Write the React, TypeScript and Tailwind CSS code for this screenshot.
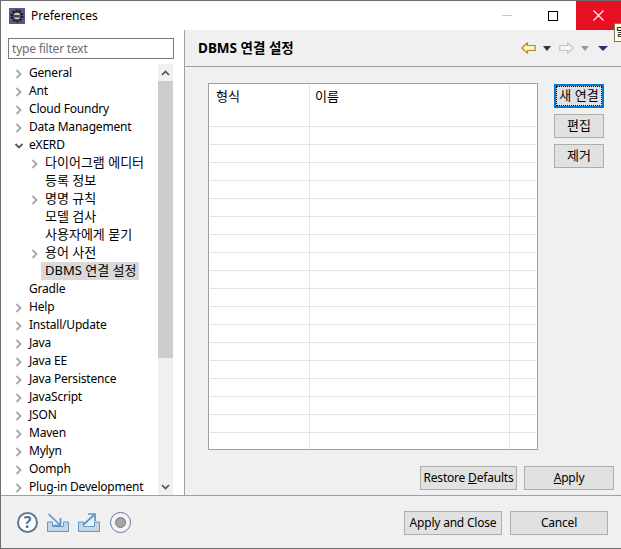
import type { ReactNode } from "react";

const FONT = "font-['Noto_Sans','Noto_Sans_CJK_KR',sans-serif]";

type Node = { label: string; level: 0 | 1; icon?: "closed" | "open"; selected?: boolean };

const tree: Node[] = [
  { label: "General", level: 0, icon: "closed" },
  { label: "Ant", level: 0, icon: "closed" },
  { label: "Cloud Foundry", level: 0, icon: "closed" },
  { label: "Data Management", level: 0, icon: "closed" },
  { label: "eXERD", level: 0, icon: "open" },
  { label: "다이어그램 에디터", level: 1, icon: "closed" },
  { label: "등록 정보", level: 1 },
  { label: "명명 규칙", level: 1, icon: "closed" },
  { label: "모델 검사", level: 1 },
  { label: "사용자에게 묻기", level: 1 },
  { label: "용어 사전", level: 1, icon: "closed" },
  { label: "DBMS 연결 설정", level: 1, selected: true },
  { label: "Gradle", level: 0 },
  { label: "Help", level: 0, icon: "closed" },
  { label: "Install/Update", level: 0, icon: "closed" },
  { label: "Java", level: 0, icon: "closed" },
  { label: "Java EE", level: 0, icon: "closed" },
  { label: "Java Persistence", level: 0, icon: "closed" },
  { label: "JavaScript", level: 0, icon: "closed" },
  { label: "JSON", level: 0, icon: "closed" },
  { label: "Maven", level: 0, icon: "closed" },
  { label: "Mylyn", level: 0, icon: "closed" },
  { label: "Oomph", level: 0, icon: "closed" },
  { label: "Plug-in Development", level: 0, icon: "closed" },
];

function Twisty({ open }: { open?: boolean }) {
  return (
    <svg width="10" height="10" viewBox="0 0 10 10" fill="none" className="shrink-0">
      {open ? (
        <path d="M1.5 3l3.5 3.5L8.5 3" stroke="#595959" strokeWidth="1.8" />
      ) : (
        <path d="M2.5 1l4 4-4 4" stroke="#a6a6a6" strokeWidth="1.8" />
      )}
    </svg>
  );
}

function TreeRow({ node }: { node: Node }) {
  return (
    <div className={`flex h-[18px] items-center ${node.level === 1 ? "pl-[29px]" : "pl-[13px]"}`}>
      <div className="flex w-[12px] shrink-0 items-center pt-[2px]">
        {node.icon && <Twisty open={node.icon === "open"} />}
      </div>
      <span
        className={`whitespace-nowrap ${
          node.level === 1 ? "pb-[2px] text-[13px] leading-[16px] tracking-normal" : "leading-[18px]"
        } ${node.selected ? "-ml-px bg-[#d9d9d9] pl-[4px] pr-[3px]" : "pl-[3px]"}`}
      >
        {node.label}
      </span>
    </div>
  );
}

function Btn({ children, className }: { children: ReactNode; className: string }) {
  return (
    <button className={`flex h-[24px] items-center justify-center border border-[#adadad] bg-[#e1e1e1] text-black ${className}`}>
      {children}
    </button>
  );
}

function Arrow({ color, fill, flip }: { color: string; fill: string; flip?: boolean }) {
  return (
    <svg width="15" height="12" viewBox="0 0 15 12" className={flip ? "-scale-x-100" : ""}>
      <path d="M.8 6L6.5.8v2.7h7.7v5H6.5v2.7z" fill={fill} stroke={color} strokeWidth="1.2" strokeLinejoin="round" />
    </svg>
  );
}

function Caret({ color, w = 8 }: { color: string; w?: number }) {
  return (
    <svg width={w} height="5" viewBox="0 0 8 5" preserveAspectRatio="none">
      <path d="M0 0h8L4 5z" fill={color} />
    </svg>
  );
}

function TrayIcon({ up }: { up?: boolean }) {
  return (
    <svg width="22" height="19" viewBox="0 0 22 19" fill="none">
      <path d="M.5 9v9.5h21V9h-5v4.5h-11V9z" fill="#c3d7ea" stroke="#6a97c2" strokeWidth="1" />
      {up ? (
        <path d="M5 12L16 2M10 1h7v7" stroke="#5a95c8" strokeWidth="1.7" />
      ) : (
        <path d="M1.5 1l11 10.5M13.5 5v7.5H6" stroke="#5a95c8" strokeWidth="1.7" />
      )}
    </svg>
  );
}

export default function App() {
  const rows = Array.from({ length: 18 });

  return (
    <div className={`relative flex h-[549px] w-[621px] flex-col overflow-hidden border-y border-l border-[#6e6e6e] bg-white text-[12px] tracking-[-0.2px] text-black ${FONT}`}>
      {/* title bar */}
      <div className="flex h-[29px] shrink-0 items-center bg-white">
        <svg width="16" height="16" viewBox="0 0 16 16" className="ml-[8px]">
          <rect width="16" height="16" fill="#66528f" />
          <circle cx="8" cy="8" r="5.2" fill="#c9c6d0" stroke="#1f1f1f" strokeWidth="2.6" strokeDasharray="2.2 1" />
          <circle cx="8" cy="8" r="4.2" fill="none" stroke="#1f1f1f" strokeWidth="1.4" />
          <rect x="4.5" y="7" width="7" height="2.5" fill="#4d4064" />
        </svg>
        <span className="ml-[6px] mt-[1px] tracking-normal">Preferences</span>
        <div className="ml-auto flex h-[29px] items-center">
          <div className="flex h-[29px] w-[46px] items-center justify-center">
            <div className="h-px w-[10px] bg-[#c8c8c8]" />
          </div>
          <div className="flex h-[29px] w-[46px] items-center justify-center">
            <div className="h-[10px] w-[10px] border border-black" />
          </div>
          <div className="flex h-[29px] w-[45px] items-center justify-center bg-[#e81123]">
            <svg width="11" height="11" viewBox="0 0 11 11">
              <path d="M.5.5l10 10M10.5.5l-10 10" stroke="#fff" strokeWidth="1.1" />
            </svg>
          </div>
        </div>
      </div>

      {/* tooltip poking in from outside the window */}
      <div className="absolute left-[613px] top-[22px] h-[19px] w-[10px] overflow-hidden border border-[#767676] bg-[#ffffe1] pl-px text-[11px] leading-[15px]">
        달
      </div>

      <div className="flex min-h-0 flex-1">
        {/* left: filter + tree */}
        <div className="flex w-[183px] shrink-0 flex-col bg-white">
          <div className="ml-[7px] mt-[8px] flex h-[21px] w-[166px] items-center border border-[#7a7a7a] px-[3px] text-[#6d6d6d]">
            type filter text
          </div>
          <div className="mt-[5px] flex min-h-0 flex-1 overflow-hidden">
            <div className="w-[150px] shrink-0 overflow-hidden">
              {tree.map((n) => (
                <TreeRow key={n.label} node={n} />
              ))}
            </div>
            <div className="ml-[7px] flex w-[15px] shrink-0 flex-col bg-[#f0f0f0]">
              <div className="flex h-[17px] items-center justify-center">
                <svg width="9" height="6" viewBox="0 0 9 6" fill="none">
                  <path d="M1 5l3.5-3.5L8 5" stroke="#505050" strokeWidth="1.6" />
                </svg>
              </div>
              <div className="h-[277px] w-[15px] bg-[#cdcdcd]" />
              <div className="flex-1" />
              <div className="flex h-[17px] items-center justify-center">
                <svg width="9" height="6" viewBox="0 0 9 6" fill="none">
                  <path d="M1 1l3.5 3.5L8 1" stroke="#505050" strokeWidth="1.6" />
                </svg>
              </div>
            </div>
          </div>
        </div>

        {/* right: page */}
        <div className="flex min-w-0 flex-1 flex-col border-l border-[#a0a0a0] bg-[#f0f0f0]">
          <div className="flex h-[37px] shrink-0 items-center border-b border-[#a0a0a0] pl-[13px] pr-[13px]">
            <span className="text-[13.5px] font-bold tracking-normal">DBMS 연결 설정</span>
            <div className="ml-auto flex items-center">
              <Arrow color="#b8872a" fill="#fff2b8" />
              <span className="ml-[7px]">
                <Caret color="#333" />
              </span>
              <span className="ml-[8px]">
                <Arrow color="#c4c4c4" fill="#f4f4f4" flip />
              </span>
              <span className="ml-[7px]">
                <Caret color="#999" />
              </span>
              <span className="ml-[9px]">
                <Caret color="#3b2a66" w={10} />
              </span>
            </div>
          </div>

          <div className="flex min-h-0 flex-1 pl-[23px] pt-[16px]">
            <div className="h-[367px] w-[330px] shrink-0 overflow-hidden border border-[#a0a0a0] bg-white px-[1px] pt-[1px] text-[13px] tracking-normal">
              <div className="grid h-[42px] grid-cols-[100px_200px_1fr] border-b border-[#e3e3e3]">
                <div className="border-r border-[#e3e3e3] pl-[6px] pt-[2px]">형식</div>
                <div className="border-r border-[#e3e3e3] pl-[5px] pt-[2px]">이름</div>
                <div />
              </div>
              {rows.map((_, i) => (
                <div key={i} className="grid h-[18px] grid-cols-[100px_200px_1fr] border-b border-[#e3e3e3]">
                  <div className="border-r border-[#e3e3e3]" />
                  <div className="border-r border-[#e3e3e3]" />
                  <div />
                </div>
              ))}
            </div>
            <div className="ml-[16px] flex flex-col gap-[6px] pt-[1px] text-[13px] tracking-normal">
              <button className="flex h-[24px] w-[50px] items-center justify-center border-2 border-[#0078d7] bg-[#e1e1e1] text-black outline-1 -outline-offset-3 outline-black outline-dotted">
                새 연결
              </button>
              <Btn className="w-[50px]">편집</Btn>
              <Btn className="w-[50px]">제거</Btn>
            </div>
          </div>

          <div className="flex h-[45px] shrink-0 justify-end gap-[7px] pr-[7px] pt-[16px]">
            <Btn className="w-[97px]">
              <span>
                Restore <span className="underline">D</span>efaults
              </span>
            </Btn>
            <Btn className="w-[90px]">
              <span>
                <span className="underline">A</span>pply
              </span>
            </Btn>
          </div>
        </div>
      </div>

      {/* bottom bar */}
      <div className="flex h-[53px] shrink-0 items-center border-t border-[#a0a0a0] bg-[#f0f0f0] pl-[16px] pr-[13px]">
        <div className="flex items-center">
          <div className="flex h-[21px] w-[21px] items-center justify-center rounded-full border-2 border-[#62779b] bg-white text-[16px] font-bold leading-none text-[#5a6f94]">
            ?
          </div>
          <div className="ml-[9px]">
            <TrayIcon />
          </div>
          <div className="ml-[9px]">
            <TrayIcon up />
          </div>
          <div className="ml-[10px] flex h-[21px] w-[21px] items-center justify-center rounded-full border border-[#62779b] bg-[#f5f5f5]">
            <div className="h-[11px] w-[11px] rounded-full border border-[#777] bg-[#a5a5a5]" />
          </div>
        </div>
        <div className="ml-auto mt-[1px] flex gap-[8px]">
          <Btn className="w-[98px]">Apply and Close</Btn>
          <Btn className="w-[98px]">Cancel</Btn>
        </div>
      </div>
    </div>
  );
}
